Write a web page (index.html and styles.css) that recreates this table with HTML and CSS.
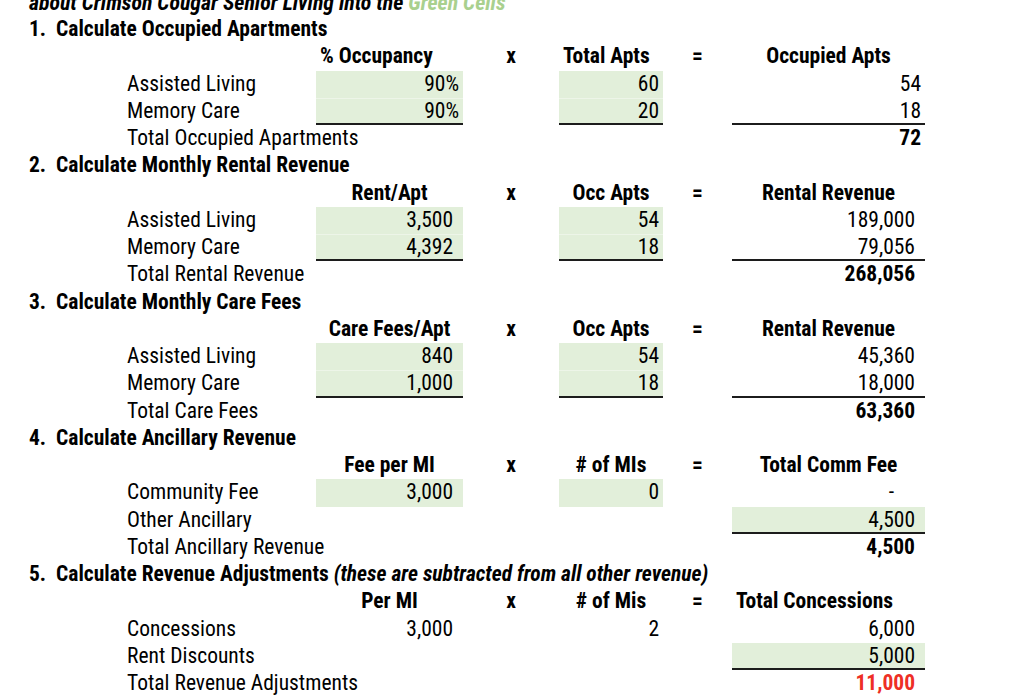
FILE: index.html
```html
<!DOCTYPE html>
<html lang="en">
<head>
<meta charset="utf-8">
<title>Crimson Cougar Senior Living - Revenue</title>
<link rel="stylesheet" href="styles.css">
</head>
<body>
<div class="sheet">
  <div class="row">
    <div class="c-sec title">about Crimson Cougar Senior Living into the <span class="green-text">Green Cells</span></div>
  </div>

  <div class="row"><div class="c-sec">1.&nbsp; Calculate Occupied Apartments</div></div>
  <div class="row hdr">
    <div class="c-a left">% Occupancy</div><div class="c-x">x</div><div class="c-b left">Total Apts</div><div class="c-eq">=</div><div class="c-r">Occupied Apts</div>
  </div>
  <div class="row">
    <div class="c-label">Assisted Living</div>
    <div class="c-a fill num">90%</div>
    <div class="c-b fill num">60</div>
    <div class="c-r num">54</div>
  </div>
  <div class="row">
    <div class="c-label">Memory Care</div>
    <div class="c-a fill fill2 ul num">90%</div>
    <div class="c-b fill fill2 ul num">20</div>
    <div class="c-r ul num">18</div>
  </div>
  <div class="row">
    <div class="c-label">Total Occupied Apartments</div>
    <div class="c-r num bold">72</div>
  </div>

  <div class="row"><div class="c-sec">2.&nbsp; Calculate Monthly Rental Revenue</div></div>
  <div class="row hdr">
    <div class="c-a">Rent/Apt</div><div class="c-x">x</div><div class="c-b">Occ Apts</div><div class="c-eq">=</div><div class="c-r">Rental Revenue</div>
  </div>
  <div class="row">
    <div class="c-label">Assisted Living</div>
    <div class="c-a fill acc">3,500</div>
    <div class="c-b fill num">54</div>
    <div class="c-r acc">189,000</div>
  </div>
  <div class="row">
    <div class="c-label">Memory Care</div>
    <div class="c-a fill fill2 ul acc">4,392</div>
    <div class="c-b fill fill2 ul num">18</div>
    <div class="c-r ul acc">79,056</div>
  </div>
  <div class="row">
    <div class="c-label">Total Rental Revenue</div>
    <div class="c-r acc bold">268,056</div>
  </div>

  <div class="row"><div class="c-sec">3.&nbsp; Calculate Monthly Care Fees</div></div>
  <div class="row hdr">
    <div class="c-a">Care Fees/Apt</div><div class="c-x">x</div><div class="c-b">Occ Apts</div><div class="c-eq">=</div><div class="c-r">Rental Revenue</div>
  </div>
  <div class="row">
    <div class="c-label">Assisted Living</div>
    <div class="c-a fill acc">840</div>
    <div class="c-b fill num">54</div>
    <div class="c-r acc">45,360</div>
  </div>
  <div class="row">
    <div class="c-label">Memory Care</div>
    <div class="c-a fill fill2 ul acc">1,000</div>
    <div class="c-b fill fill2 ul num">18</div>
    <div class="c-r ul acc">18,000</div>
  </div>
  <div class="row">
    <div class="c-label">Total Care Fees</div>
    <div class="c-r acc bold">63,360</div>
  </div>

  <div class="row"><div class="c-sec">4.&nbsp; Calculate Ancillary Revenue</div></div>
  <div class="row hdr">
    <div class="c-a">Fee per MI</div><div class="c-x">x</div><div class="c-b"># of MIs</div><div class="c-eq">=</div><div class="c-r">Total Comm Fee</div>
  </div>
  <div class="row">
    <div class="c-label">Community Fee</div>
    <div class="c-a fill acc">3,000</div>
    <div class="c-b fill num">0</div>
    <div class="c-r dash">-</div>
  </div>
  <div class="row">
    <div class="c-label">Other Ancillary</div>
    <div class="c-r fill ul acc">4,500</div>
  </div>
  <div class="row">
    <div class="c-label">Total Ancillary Revenue</div>
    <div class="c-r acc bold">4,500</div>
  </div>

  <div class="row"><div class="c-sec">5.&nbsp; Calculate Revenue Adjustments <em>(these are subtracted from all other revenue)</em></div></div>
  <div class="row hdr">
    <div class="c-a">Per MI</div><div class="c-x">x</div><div class="c-b"># of Mis</div><div class="c-eq">=</div><div class="c-r left">Total Concessions</div>
  </div>
  <div class="row">
    <div class="c-label">Concessions</div>
    <div class="c-a acc">3,000</div>
    <div class="c-b num">2</div>
    <div class="c-r acc">6,000</div>
  </div>
  <div class="row">
    <div class="c-label">Rent Discounts</div>
    <div class="c-r fill ul acc">5,000</div>
  </div>
  <div class="row">
    <div class="c-label">Total Revenue Adjustments</div>
    <div class="c-r acc bold red">11,000</div>
  </div>
</div>
</body>
</html>
```
FILE: styles.css
```css
html, body {
  margin: 0;
  padding: 0;
  background: #ffffff;
}

body {
  font-family: "Roboto Condensed", "Roboto", sans-serif;
  font-stretch: 75%;
  font-size: 21.5px;
  color: #000000;
  overflow: hidden;
}

.sheet {
  margin-top: -11.25px;
}

.row {
  display: grid;
  grid-template-columns: 26px 97px 193px 147px 96px 104px 69px 193px;
  height: 27.25px;
  line-height: 26.5px;
}

.row > div {
  box-sizing: border-box;
  height: 27.25px;
  white-space: nowrap;
}

.c-sec {
  grid-column: 2 / -1;
  font-weight: 700;
  padding-left: 3px;
}

.c-sec em {
  font-style: italic;
}

.title {
  font-style: italic;
  font-size: 21.8px;
  line-height: 22px;
  padding-top: 3px;
}

.green-text {
  color: #a9d08e;
}

.c-label {
  grid-column: 3;
  padding-left: 4px;
}

.c-a { grid-column: 4; }
.c-x { grid-column: 5; }
.c-b { grid-column: 6; }
.c-eq { grid-column: 7; }
.c-r { grid-column: 8; }

.hdr > div {
  font-weight: 700;
  text-align: center;
}

.hdr > .left {
  text-align: left;
  padding-left: 4px;
}

.fill {
  background: #e2efda;
}

.fill2 {
  box-shadow: inset 0 1px 0 #edf5e8;
}

.ul {
  border-bottom: 2px solid #1c1c1c;
}

.num {
  text-align: right;
  padding-right: 4px;
}

.acc {
  text-align: right;
  padding-right: 10px;
}

.dash {
  text-align: right;
  padding-right: 31px;
}

.bold {
  font-weight: 700;
}

.red {
  color: #ee2f25;
}
```
